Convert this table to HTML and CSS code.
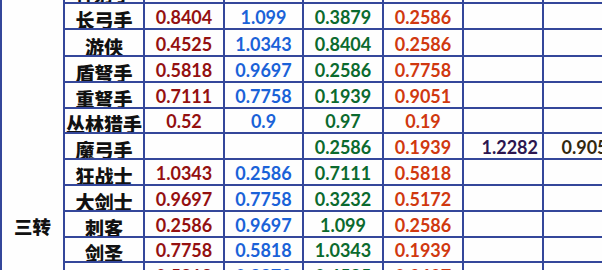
FILE: index.html
```html
<!DOCTYPE html>
<html lang="zh">
<head>
<meta charset="utf-8">
<title>三转</title>
<link rel="stylesheet" href="styles.css">
</head>
<body>
<div class="sheet">
  <div class="cell group">三转</div>

  <div class="cell name">神射手</div>
  <div class="cell c2">0.6466</div>
  <div class="cell c3">0.8404</div>
  <div class="cell c4">0.5172</div>
  <div class="cell c5">0.3232</div>
  <div class="cell c6"></div>
  <div class="cell c7"></div>

  <div class="cell name">长弓手</div>
  <div class="cell c2">0.8404</div>
  <div class="cell c3">1.099</div>
  <div class="cell c4">0.3879</div>
  <div class="cell c5">0.2586</div>
  <div class="cell c6"></div>
  <div class="cell c7"></div>

  <div class="cell name">游侠</div>
  <div class="cell c2">0.4525</div>
  <div class="cell c3">1.0343</div>
  <div class="cell c4">0.8404</div>
  <div class="cell c5">0.2586</div>
  <div class="cell c6"></div>
  <div class="cell c7"></div>

  <div class="cell name">盾弩手</div>
  <div class="cell c2">0.5818</div>
  <div class="cell c3">0.9697</div>
  <div class="cell c4">0.2586</div>
  <div class="cell c5">0.7758</div>
  <div class="cell c6"></div>
  <div class="cell c7"></div>

  <div class="cell name">重弩手</div>
  <div class="cell c2">0.7111</div>
  <div class="cell c3">0.7758</div>
  <div class="cell c4">0.1939</div>
  <div class="cell c5">0.9051</div>
  <div class="cell c6"></div>
  <div class="cell c7"></div>

  <div class="cell name">丛林猎手</div>
  <div class="cell c2">0.52</div>
  <div class="cell c3">0.9</div>
  <div class="cell c4">0.97</div>
  <div class="cell c5">0.19</div>
  <div class="cell c6"></div>
  <div class="cell c7"></div>

  <div class="cell name">魔弓手</div>
  <div class="cell c2"></div>
  <div class="cell c3"></div>
  <div class="cell c4">0.2586</div>
  <div class="cell c5">0.1939</div>
  <div class="cell c6">1.2282</div>
  <div class="cell c7">0.9051</div>

  <div class="cell name">狂战士</div>
  <div class="cell c2">1.0343</div>
  <div class="cell c3">0.2586</div>
  <div class="cell c4">0.7111</div>
  <div class="cell c5">0.5818</div>
  <div class="cell c6"></div>
  <div class="cell c7"></div>

  <div class="cell name">大剑士</div>
  <div class="cell c2">0.9697</div>
  <div class="cell c3">0.7758</div>
  <div class="cell c4">0.3232</div>
  <div class="cell c5">0.5172</div>
  <div class="cell c6"></div>
  <div class="cell c7"></div>

  <div class="cell name">刺客</div>
  <div class="cell c2">0.2586</div>
  <div class="cell c3">0.9697</div>
  <div class="cell c4">1.099</div>
  <div class="cell c5">0.2586</div>
  <div class="cell c6"></div>
  <div class="cell c7"></div>

  <div class="cell name">剑圣</div>
  <div class="cell c2">0.7758</div>
  <div class="cell c3">0.5818</div>
  <div class="cell c4">1.0343</div>
  <div class="cell c5">0.1939</div>
  <div class="cell c6"></div>
  <div class="cell c7"></div>

  <div class="cell name">圣殿骑士</div>
  <div class="cell c2">0.5818</div>
  <div class="cell c3">0.3879</div>
  <div class="cell c4">0.4525</div>
  <div class="cell c5">0.9697</div>
  <div class="cell c6"></div>
  <div class="cell c7"></div>
</div>
</body>
</html>
```
FILE: styles.css
```css
html, body {
  margin: 0;
  padding: 0;
  overflow: hidden;
  background: #fefefe;
}

.sheet {
  display: grid;
  grid-template-columns: 61px 78px 78px 77px 78px 78px 78px 78px;
  grid-template-rows: 24px 24px 25px 24px 24px 23px 24px 24px 24px 24px 23px 24px;
  gap: 2px;
  padding-left: 2px;
  margin-top: -22px;
  width: max-content;
  background: #34479a;
}

.cell {
  background: #fefefe;
  display: flex;
  align-items: flex-end;
  justify-content: center;
  padding-bottom: 2px;
  box-sizing: border-box;
  font-family: Lato, "Noto Sans", sans-serif;
  font-weight: 700;
  font-size: 18px;
  line-height: 18px;
  white-space: nowrap;
  overflow: hidden;
}

.group {
  grid-row: 1 / -1;
  grid-column: 1;
  align-items: flex-start;
  padding-top: 238px;
  padding-bottom: 0;
  font-family: "Noto Sans CJK SC", sans-serif;
  font-weight: 900;
  font-size: 18.5px;
  line-height: 20px;
  color: #111;
}

.name {
  font-family: "Noto Sans CJK SC", sans-serif;
  font-weight: 900;
  font-size: 19px;
  line-height: 16px;
  padding-bottom: 0;
  color: #111;
}

.c2 { color: #941010; }
.c3 { color: #1a62d8; }
.c4 { color: #0b6a2e; }
.c5 { color: #d0380f; }

.c6, .c7 {
  justify-content: flex-end;
  padding-right: 4px;
}

.c6 { color: #2c1650; }
.c7 { color: #33280e; }
```
